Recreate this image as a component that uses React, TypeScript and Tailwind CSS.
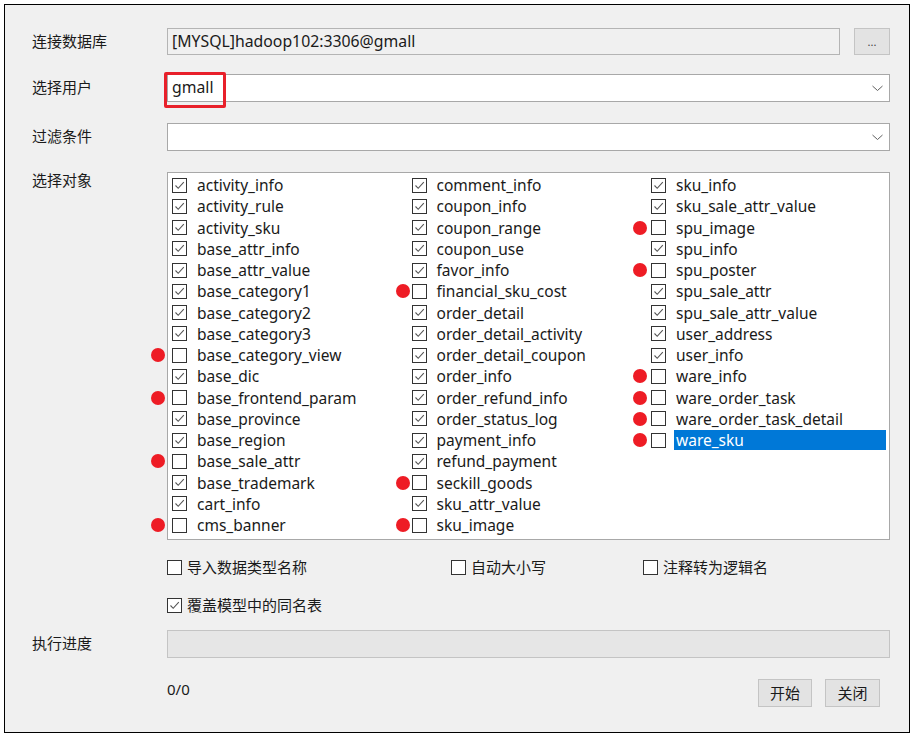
const FONT = { fontFamily: '"Noto Sans", "Noto Sans CJK SC", sans-serif' };

type Item = { name: string; checked: boolean; selected?: boolean };

const u = (name: string): Item => ({ name, checked: false });
const c = (name: string): Item => ({ name, checked: true });

const COLUMNS: Item[][] = [
  [
    c("activity_info"), c("activity_rule"), c("activity_sku"), c("base_attr_info"),
    c("base_attr_value"), c("base_category1"), c("base_category2"), c("base_category3"),
    u("base_category_view"), c("base_dic"), u("base_frontend_param"), c("base_province"),
    c("base_region"), u("base_sale_attr"), c("base_trademark"), c("cart_info"), u("cms_banner"),
  ],
  [
    c("comment_info"), c("coupon_info"), c("coupon_range"), c("coupon_use"), c("favor_info"),
    u("financial_sku_cost"), c("order_detail"), c("order_detail_activity"), c("order_detail_coupon"),
    c("order_info"), c("order_refund_info"), c("order_status_log"), c("payment_info"),
    c("refund_payment"), u("seckill_goods"), c("sku_attr_value"), u("sku_image"),
  ],
  [
    c("sku_info"), c("sku_sale_attr_value"), u("spu_image"), c("spu_info"), u("spu_poster"),
    c("spu_sale_attr"), c("spu_sale_attr_value"), c("user_address"), c("user_info"),
    u("ware_info"), u("ware_order_task"), u("ware_order_task_detail"),
    { name: "ware_sku", checked: false, selected: true },
  ],
];

// red annotation dot offsets per column (relative to the checkbox)
const DOT_LEFT = ["-left-[21px]", "-left-[16px]", "-left-[18px]"];

function CheckBox({ checked }: { checked: boolean }) {
  return (
    <span className="flex h-[15px] w-[15px] shrink-0 items-center justify-center border border-[#333333] bg-white">
      {checked && (
        <svg width="13" height="13" viewBox="0 0 13 13">
          <polyline points="2.5,6.5 5.2,9.3 10.8,3.2" fill="none" stroke="#555" strokeWidth="1.1" />
        </svg>
      )}
    </span>
  );
}

function Chevron() {
  return (
    <svg width="11" height="7" viewBox="0 0 11 7" className="mr-[6px]">
      <polyline points="0.5,1 5.5,5.5 10.5,1" fill="none" stroke="#606060" strokeWidth="1" />
    </svg>
  );
}

function Label({ children }: { children: React.ReactNode }) {
  return <div className="w-[135px] shrink-0 pb-[1px] text-[15px] text-[#1a1a1a]">{children}</div>;
}

export default function App() {
  return (
    <div className="h-[735px] w-[913px] bg-white p-[4px]" style={FONT}>
      <div className="flex h-[729px] w-[906px] flex-col border border-black bg-[#f0f0f0] pl-[27px] pr-[19px] text-[15px] text-[#1a1a1a]">
        {/* 连接数据库 */}
        <div className="mt-[23px] flex h-[27px] items-center">
          <Label>连接数据库</Label>
          <div className="flex h-full flex-1 items-center border border-[#b4b4b4] bg-[#f0f0f0] pl-[4px] text-[15.8px]">
            [MYSQL]hadoop102:3306@gmall
          </div>
          <button className="ml-[14px] flex h-[27px] w-[36px] items-center justify-center border border-[#c4c4c4] bg-[#e3e3e3] text-[11px] leading-none text-[#444]">
            ...
          </button>
        </div>

        {/* 选择用户 */}
        <div className="mt-[19px] flex h-[28px] items-center">
          <Label>选择用户</Label>
          <div className="relative flex h-full flex-1 items-center justify-between border border-[#a8a8a8] bg-white pl-[4px]">
            <span className="text-[15.8px]">gmall</span>
            <Chevron />
            <div className="absolute -left-[4px] -top-[3px] h-[36px] w-[62px] rounded-[2px] border-[3px] border-[#e8202a]" />
          </div>
        </div>

        {/* 过滤条件 */}
        <div className="mt-[21px] flex h-[28px] items-center">
          <Label>过滤条件</Label>
          <div className="flex h-full flex-1 items-center justify-end border border-[#a8a8a8] bg-white">
            <Chevron />
          </div>
        </div>

        {/* 选择对象 */}
        <div className="mt-[21px] flex items-start">
          <div className="-mt-[3px]">
            <Label>选择对象</Label>
          </div>
          <div className="grid h-[368px] flex-1 grid-cols-[239.5px_239.5px_1fr] border border-[#a8a8a8] bg-white pl-[4px] pr-[3px] pt-[1.5px] text-[15.5px]">
            {COLUMNS.map((col, ci) => (
              <div key={ci} className="flex flex-col">
                {col.map((it) => (
                  <div key={it.name} className="relative flex h-[21.25px] items-center">
                    {!it.checked && (
                      <span className={`absolute ${DOT_LEFT[ci]} top-[3.5px] h-[14px] w-[14px] rounded-full bg-[#ee1c25]`} />
                    )}
                    <CheckBox checked={it.checked} />
                    <span
                      className={
                        it.selected
                          ? "ml-[8px] flex h-[20px] flex-1 items-center bg-[#0078d7] pl-[2px] text-white"
                          : "ml-[10px] leading-[20px]"
                      }
                    >
                      {it.name}
                    </span>
                  </div>
                ))}
              </div>
            ))}
          </div>
        </div>

        {/* options */}
        <div className="ml-[135px] mt-[16px] grid h-[20px] grid-cols-[284px_192px_1fr] items-center">
          <div className="flex items-center gap-[5px]">
            <CheckBox checked={false} />
            <span>导入数据类型名称</span>
          </div>
          <div className="flex items-center gap-[5px]">
            <CheckBox checked={false} />
            <span>自动大小写</span>
          </div>
          <div className="flex items-center gap-[5px]">
            <CheckBox checked={false} />
            <span>注释转为逻辑名</span>
          </div>
        </div>
        <div className="ml-[135px] mt-[19px] flex h-[20px] items-center gap-[5px]">
          <CheckBox checked={true} />
          <span>覆盖模型中的同名表</span>
        </div>

        {/* 执行进度 */}
        <div className="mt-[15px] flex h-[28px] items-center">
          <Label>执行进度</Label>
          <div className="h-full flex-1 border border-[#c4c4c4] bg-[#e6e6e6]" />
        </div>

        <div className="mt-[21px] flex items-start">
          <div className="w-[135px]" />
          <div className="flex flex-1 items-start justify-between">
            <span className="leading-[20px]">0/0</span>
            <div className="mr-[10px] flex gap-[13px]">
              <button className="h-[28px] w-[54px] border border-[#c4c4c4] bg-[#e3e3e3] text-[15px]">开始</button>
              <button className="h-[28px] w-[55px] border border-[#c4c4c4] bg-[#e3e3e3] text-[15px]">关闭</button>
            </div>
          </div>
        </div>
      </div>
    </div>
  );
}
